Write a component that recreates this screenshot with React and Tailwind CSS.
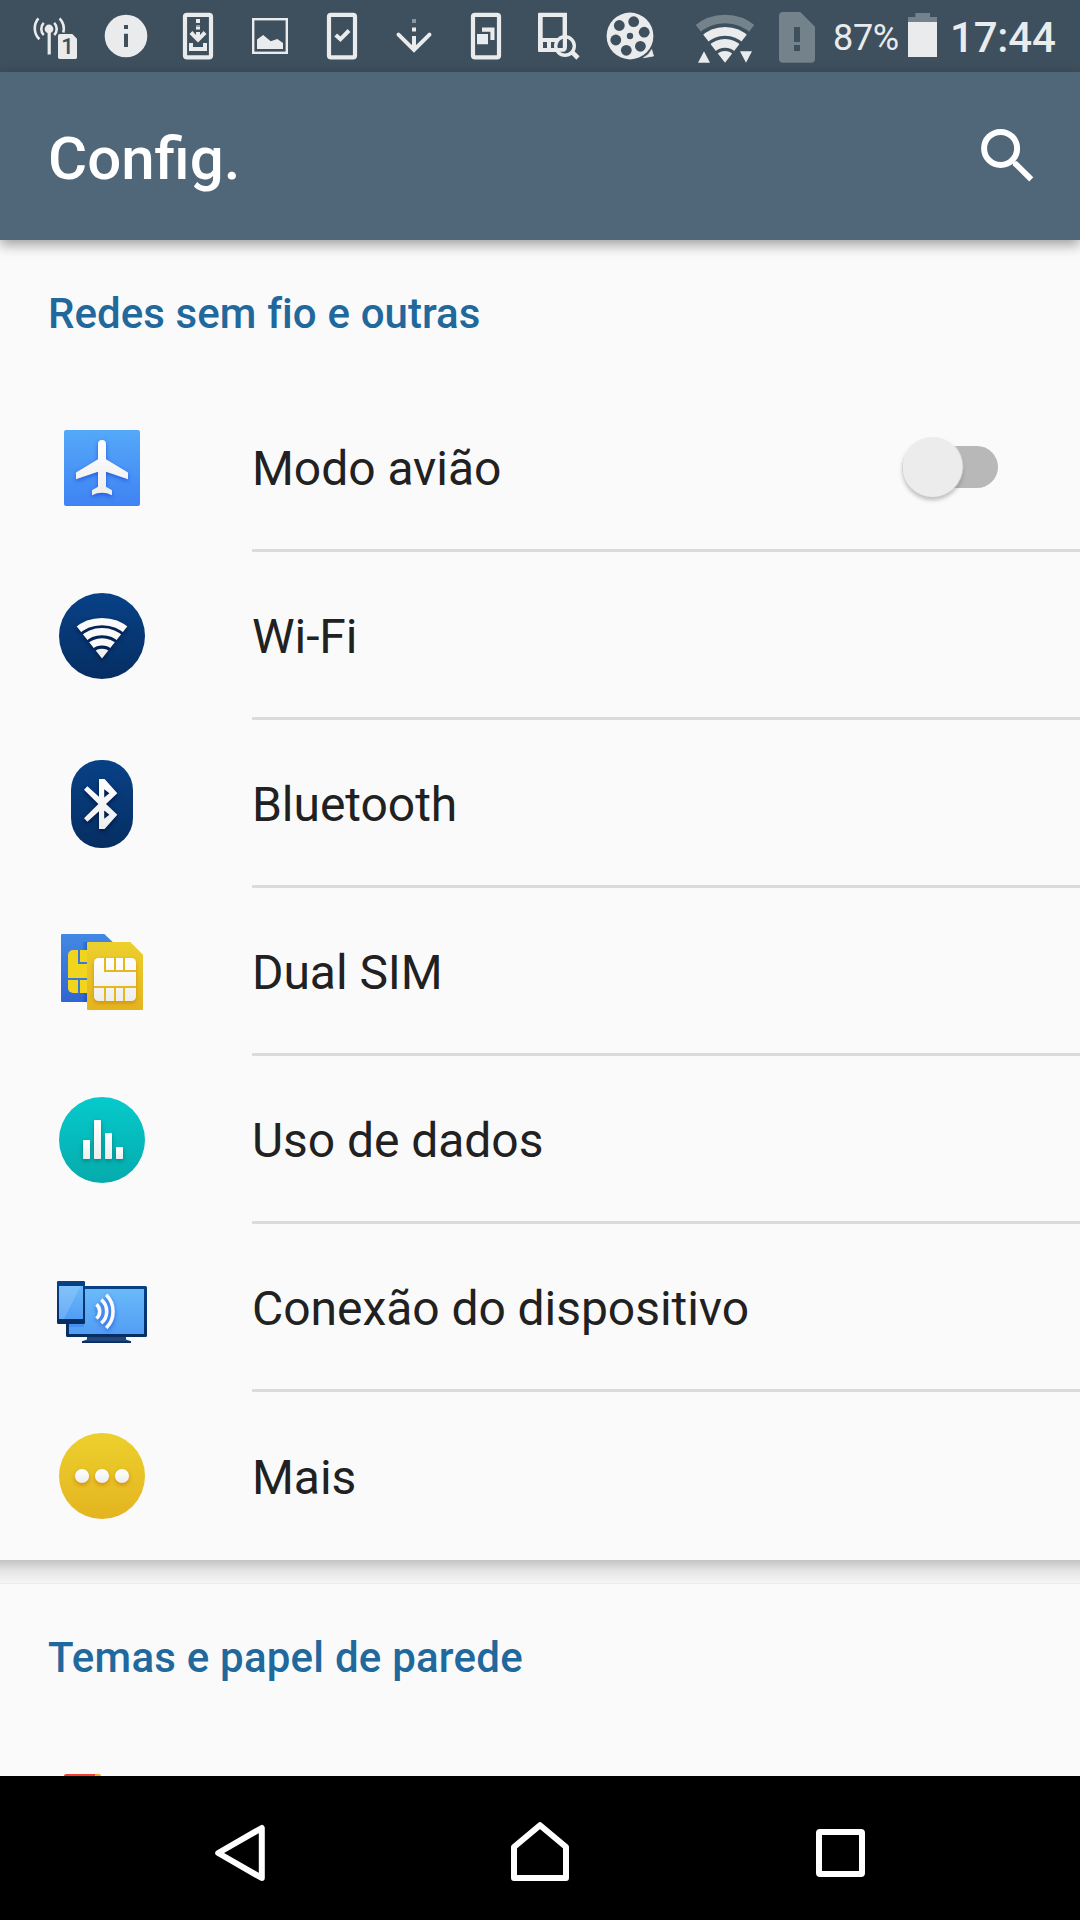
import React from "react";

const LIGHT = "#e9ebed";
const BAR = "#3e4f5d";

function StatusIcon({ children }) {
  return (
    <svg className="h-[72px] w-[72px] shrink-0" viewBox="0 0 72 72" fill={LIGHT}>
      {children}
    </svg>
  );
}

function PhoneFrame() {
  return <rect x="23" y="14.8" width="26" height="42.6" rx="2" fill="none" stroke={LIGHT} strokeWidth="4.2" />;
}

function StatusBar() {
  return (
    <div className="flex h-[72px] items-center bg-[#3e4f5d] pl-[18px] text-[#e9ebed]">
      <StatusIcon>
        <circle cx="31" cy="29" r="4.4" />
        <rect x="29.6" y="29" width="3.2" height="25.5" />
        <g fill="none" stroke={LIGHT} strokeWidth="2.6">
          <path d="M36.2 22.8A8.6 8.6 0 0 1 36.2 35M25.8 22.8A8.6 8.6 0 0 0 25.8 35" />
          <path d="M41.6 18.3A15.5 15.5 0 0 1 45.3 32.5M20.4 18.3A15.5 15.5 0 0 0 21.4 39.3" />
        </g>
        <path d="M42 34H54.3L59 38.7V57.3Q59 59 57.3 59H41.7Q40 59 40 57.3V35.7Q40 34 42 34Z" />
        <text x="43.2" y="54.4" fontSize="22" fontWeight="500" fontFamily="Roboto, sans-serif" fill={BAR}>1</text>
      </StatusIcon>
      <StatusIcon>
        <circle cx="36" cy="36" r="21.3" />
        <path fill={BAR} d="M34 25h4v4h-4zM34 33.7h4V47h-4z" />
      </StatusIcon>
      <StatusIcon>
        <PhoneFrame />
        <path d="M34 19h4v4h-4zM34 27h4v2.5h-4zM34 32h4v3l3.6-3.9 2.9 2.9L36 42.4 27.5 34l2.9-2.9L34 35z" />
        <path opacity=".5" d="M34 25h4v2h-4z" />
        <path d="M27 43H31V47H41V43H45V51H27Z" />
      </StatusIcon>
      <StatusIcon>
        <rect x="19.2" y="19.2" width="33.6" height="33.6" fill="none" stroke={LIGHT} strokeWidth="2.4" />
        <path d="M23 39.5 29.2 35 36.7 41.2 43.3 39 49 43V49H23Z" />
      </StatusIcon>
      <StatusIcon>
        <PhoneFrame />
        <path d="M29.7 35 34.4 39.3 43 30.5" fill="none" stroke={LIGHT} strokeWidth="4" />
      </StatusIcon>
      <StatusIcon>
        <path d="M20.5 34.6 36 50 51.5 34.6" fill="none" stroke={LIGHT} strokeWidth="4" strokeLinecap="round" />
        <path d="M34 36h4v12h-4zM34 27.5h4v4h-4z" />
        <path opacity=".45" d="M34 19h4v4h-4z" />
      </StatusIcon>
      <StatusIcon>
        <PhoneFrame />
        <path d="M27 34H38V44.3H27ZM32 27.6H44.5V40H40.4V31.8H32Z" />
      </StatusIcon>
      <StatusIcon>
        <path fillRule="evenodd" d="M17 12.8H45V52H17Q16 52 16 51V13.8Q16 12.8 17 12.8ZM20.7 17V38H40.6V17ZM21 42V48H25V42ZM29 42V48H33V42Z" />
        <circle cx="43" cy="46" r="9.3" fill={BAR} stroke={LIGHT} strokeWidth="3.4" />
        <path d="M40.8 38H45V46Q45 51.8 41 51.8H35.5V48H40.8Z" />
        <path d="M49.6 51.6 56 58" stroke={LIGHT} strokeWidth="4.6" />
      </StatusIcon>
      <StatusIcon>
        <circle cx="36" cy="36" r="23.4" />
        <g fill={BAR}>
          <circle cx="25.3" cy="25.5" r="5.4" />
          <circle cx="39.7" cy="21.7" r="5.4" />
          <circle cx="50.2" cy="32.2" r="5.4" />
          <circle cx="46.4" cy="46.3" r="5.4" />
          <circle cx="32.3" cy="50.3" r="5.4" />
          <circle cx="21.8" cy="40" r="5.4" />
          <circle cx="36" cy="36" r="3.2" />
        </g>
        <path d="M57.6 49.6 59.5 56 49.5 57.7Q55 55.4 57.6 49.6Z" stroke={LIGHT} strokeWidth=".8" />
      </StatusIcon>
      <svg className="ml-[18px] h-[72px] w-[82px] shrink-0" viewBox="0 0 82 72">
        <clipPath id="signalWedge">
          <path d="M41 62.8 10.6 23.4V0H71.4V23.4Z" />
        </clipPath>
        <g clipPath="url(#signalWedge)" fill="none" stroke={LIGHT} strokeWidth="8.7">
          <circle cx="41" cy="62" r="43" stroke="#74828c" />
          <circle cx="41" cy="62" r="30.7" />
          <circle cx="41" cy="62" r="18.7" />
          <circle cx="41" cy="62" r="11" fill={LIGHT} stroke="none" />
        </g>
        <path fill={LIGHT} d="M20 51.3 26 62.8H14ZM56 51.2H68L62 62.8Z" />
      </svg>
      <svg className="h-[72px] w-[60px] shrink-0" viewBox="0 0 60 72">
        <path fill="#74828c" d="M17 12H34.3L49 26.7V58.7Q49 62.8 45 62.8H17Q13 62.8 13 58.7V16Q13 12 17 12Z" />
        <path fill={BAR} d="M28 27h6v15h-6zM28 45h6v6h-6z" />
      </svg>
      <span className="ml-[7px] mt-[4px] w-[67px] text-[36px] leading-[42px] tracking-[-0.3px]">87%</span>
      <svg className="ml-[8px] h-[72px] w-[29px] shrink-0" viewBox="0 0 29 72">
        <path fill="#74828c" d="M7.3 13H22V17H29V22H0V17H7.3Z" />
        <path fill={LIGHT} d="M0 22H29V57H0Z" />
      </svg>
      <span className="ml-[13px] mt-[3px] text-[42px] font-medium leading-[50px] tracking-[-0.2px]">17:44</span>
    </div>
  );
}

function AppBar() {
  return (
    <header className="relative z-10 flex h-[168px] items-center justify-between bg-[#50677a] pl-[48px] pr-[44px] shadow-[0_5px_12px_rgba(0,0,0,0.36)]">
      <h1 className="mt-[5px] text-[60px] font-medium leading-[72px] text-white">Config.</h1>
      <svg className="h-[64px] w-[64px]" viewBox="0 0 64 64" fill="none" stroke="#fff" strokeWidth="6">
        <circle cx="28.6" cy="24.4" r="16.5" />
        <path d="M40.8 37.2V41.2L57.2 57.4 61.3 53.3 45 37.2Z" fill="#fff" stroke="none" />
      </svg>
    </header>
  );
}

function Grad({ id, from, to }) {
  return (
    <linearGradient id={id} x1="0" y1="0" x2="0" y2="1">
      <stop offset="0" stopColor={from} />
      <stop offset="1" stopColor={to} />
    </linearGradient>
  );
}

function RowIcon({ children }) {
  return (
    <svg className="h-[120px] w-[120px] shrink-0" viewBox="0 0 120 120">
      {children}
    </svg>
  );
}

function AirplaneIcon() {
  return (
    <RowIcon>
      <rect x="22" y="22" width="76" height="76" rx="2" fill="url(#skyBlue)" />
      <path
        className="drop-shadow-[0_2px_2px_rgba(20,70,220,0.7)]"
        fill="url(#white)"
        d="M56 36Q56 32 60 32Q64 32 64 36V51.3L86 64.4V71.2L64 63.8V78.8L70 82.3V87.2Q60 82.4 50 87.2V82.3L56 78.8V63.8L34 71.2V64.4L56 51.3Z"
      />
    </RowIcon>
  );
}

function WifiIcon() {
  return (
    <RowIcon>
      <clipPath id="wifiWedge">
        <path d="M60 82.6 32.2 47.3V30H87.8V47.3Z" />
      </clipPath>
      <circle cx="60" cy="60" r="43" fill="url(#navy)" />
      <g className="drop-shadow-[0_2px_2px_rgba(0,10,50,0.7)]">
        <g clipPath="url(#wifiWedge)" fill="none" stroke="#fafafa" strokeWidth="7.3">
          <circle cx="60" cy="84.5" r="38.9" />
          <circle cx="60" cy="84.5" r="28.8" />
          <circle cx="60" cy="84.5" r="18.6" />
          <circle cx="60" cy="84.5" r="11.8" fill="#f0f0f0" stroke="none" />
        </g>
      </g>
    </RowIcon>
  );
}

function BluetoothIcon() {
  return (
    <RowIcon>
      <rect x="29" y="16" width="62" height="88" rx="30" fill="url(#navy)" />
      <path
        className="drop-shadow-[0_2px_2px_rgba(0,10,50,0.7)]"
        fill="url(#white)"
        fillRule="evenodd"
        d="M57 35H62.6L75.3 49.3 64 60 75.3 70.7 62.6 85H57V67.3L45.4 77.8 42 74.2 56.4 60 42 45.8 45.4 42.2 57 52.7ZM62.2 45.2V53.6L67.4 49.3ZM62.2 66.4V74.8L67.4 70.7Z"
      />
    </RowIcon>
  );
}

function SimIcon() {
  return (
    <RowIcon>
      <clipPath id="backCard">
        <path d="M20 22H62.3L72 31.3V90H20Q19 90 19 89V23Q19 22 20 22Z" />
      </clipPath>
      <g clipPath="url(#backCard)">
        <rect x="19" y="22" width="56" height="68" fill="url(#simBlue)" />
        <rect x="26" y="38" width="42" height="43" rx="5" fill="#f0d51c" />
        <path fill="#3c78da" d="M36 38h2v12h9v2H36zM26 66h20v2H26zM36 68h2v13h-2z" />
        <path fill="url(#edgeShade)" d="M40 30H46V38H40ZM40 81H46V90H40Z" />
      </g>
      <path d="M46 30H88.3L101 42.7V97Q101 98 100 98H46Q45 98 45 97V31Q45 30 46 30Z" fill="url(#gold)" />
      <rect x="52" y="46" width="42" height="43" rx="4.5" fill="url(#white)" className="drop-shadow-[0_2px_2px_rgba(200,130,0,0.7)]" />
      <path fill="#e5b820" d="M62 46h2v12h8V46h2v12h7V46h2v12h11v2H62zM52 74h42v2H83v13h-2V76h-7v13h-2V76h-8v13h-2V76H52z" />
    </RowIcon>
  );
}

function DataIcon() {
  return (
    <RowIcon>
      <circle cx="60" cy="60" r="43" fill="url(#teal)" />
      <g fill="url(#white)" className="drop-shadow-[0_2px_2px_rgba(0,80,80,0.5)]">
        <rect x="41" y="60" width="7" height="19" rx=".7" />
        <rect x="52" y="40" width="7" height="39" rx=".7" />
        <rect x="63" y="53" width="7" height="26" rx=".7" />
        <rect x="74" y="67" width="7" height="12" rx=".7" />
      </g>
    </RowIcon>
  );
}

function DeviceIcon() {
  return (
    <RowIcon>
      <path d="M45 88H84V91.5L89 93.3V95H40V93.3L45 91.5Z" fill="#21477a" />
      <path d="M40 93.3H89V95H40Z" fill="#082d63" />
      <rect x="24" y="38" width="81" height="51" rx="1.5" fill="url(#navy)" />
      <rect x="27" y="41" width="75" height="45" fill="url(#screen)" />
      <rect x="27" y="76" width="15" height="3" fill="#2f6fe0" opacity=".35" />
      <rect x="15" y="33" width="28" height="43" rx="1.2" fill="url(#navy)" />
      <rect x="17" y="38" width="24" height="33" fill="url(#screen)" />
      <path d="M17 38H38.7L22 71H17Z" fill="#fff" opacity=".15" />
      <g fill="none" stroke="#fafafa" strokeWidth="3.6" className="drop-shadow-[0_2px_2px_rgba(20,70,220,0.7)]">
        <path d="M54.4 56.3A9.3 9.3 0 0 1 54.4 70.5" />
        <path d="M59.2 51.6A15.4 15.4 0 0 1 59.2 75.2" />
        <path d="M64.2 46.8A23.5 23.5 0 0 1 64.2 80" />
      </g>
    </RowIcon>
  );
}

function MoreIcon() {
  return (
    <RowIcon>
      <circle cx="60" cy="60" r="43" fill="url(#gold)" />
      <g fill="url(#white)" className="drop-shadow-[0_2px_2px_rgba(200,120,0,0.7)]">
        <circle cx="40" cy="60" r="7.1" />
        <circle cx="60" cy="60" r="7.1" />
        <circle cx="80" cy="60" r="7.1" />
      </g>
    </RowIcon>
  );
}

function Toggle() {
  return (
    <button role="switch" aria-checked="false" aria-label="Modo avião" className="mr-[82px] flex h-[60px] w-[96px] items-center">
      <span className="flex h-[42px] w-full items-center rounded-full bg-[#b8b8b8]">
        <span className="mt-[1px] h-[60px] w-[60px] shrink-0 translate-x-[0.5px] rounded-full bg-[#ececec] shadow-[0_3px_4px_rgba(0,0,0,0.25),0_0_1px_1px_rgba(255,255,255,0.6)]" />
      </span>
    </button>
  );
}

const ROWS = [
  { label: "Modo avião", Icon: AirplaneIcon, toggle: true },
  { label: "Wi-Fi", Icon: WifiIcon },
  { label: "Bluetooth", Icon: BluetoothIcon },
  { label: "Dual SIM", Icon: SimIcon },
  { label: "Uso de dados", Icon: DataIcon },
  { label: "Conexão do dispositivo", Icon: DeviceIcon },
  { label: "Mais", Icon: MoreIcon },
];

function SettingRow({ label, Icon, toggle, last }) {
  return (
    <li className="flex h-[168px] items-center pl-[42px]">
      <Icon />
      <div className={`ml-[90px] flex h-full flex-1 items-center justify-between ${last ? "" : "border-b-[3px] border-[#dbdbdb]"}`}>
        <span className={`text-[48px] leading-[56px] text-[#212121] tracking-[-0.05px] ${last ? "mt-[4px]" : "mt-[5px]"}`}>{label}</span>
        {toggle && <Toggle />}
      </div>
    </li>
  );
}

function SectionTitle({ children }) {
  return <h2 className="flex h-[144px] items-center pl-[48px] pt-[4px] text-[42px] font-medium leading-[50px] text-[#21689d]">{children}</h2>;
}

function NavBar() {
  return (
    <nav className="flex h-[144px] items-center justify-center gap-[200px] bg-black">
      <svg className="h-[100px] w-[100px]" viewBox="0 0 100 100" fill="none" stroke="#fff" strokeWidth="6" strokeLinejoin="round">
        <path d="M28.2 55 71.8 30V80Z" />
      </svg>
      <svg className="h-[100px] w-[100px]" viewBox="0 0 100 100" fill="none" stroke="#fff" strokeWidth="6" strokeLinejoin="round">
        <path d="M24 80V49L50 27.2 76 49V80Z" />
      </svg>
      <svg className="h-[100px] w-[100px]" viewBox="0 0 100 100" fill="none" stroke="#fff" strokeWidth="6">
        <rect x="29" y="34" width="43" height="42" rx="1" />
      </svg>
    </nav>
  );
}

export default function App() {
  return (
    <div className="flex h-[1920px] w-[1080px] flex-col overflow-hidden bg-[#fafafa] font-['Roboto',sans-serif]">
      <svg className="absolute h-0 w-0" aria-hidden="true">
        <defs>
          <Grad id="skyBlue" from="#54a9f8" to="#3f83f3" />
          <Grad id="navy" from="#084187" to="#062e62" />
          <Grad id="simBlue" from="#4388e4" to="#3065d2" />
          <Grad id="gold" from="#ecd02d" to="#e4b420" />
          <Grad id="teal" from="#06cacc" to="#05abac" />
          <Grad id="screen" from="#6abaf9" to="#529df5" />
          <Grad id="white" from="#ffffff" to="#ededed" />
          <linearGradient id="edgeShade">
            <stop offset="0" stopColor="#1240b0" stopOpacity="0" />
            <stop offset="1" stopColor="#1240b0" stopOpacity=".6" />
          </linearGradient>
        </defs>
      </svg>
      <StatusBar />
      <AppBar />
      <main className="flex-1 overflow-hidden">
        <section className="h-[1320px]">
          <SectionTitle><span className="tracking-[0.01px] [font-variant-ligatures:common-ligatures] [word-spacing:0.4px]">Redes sem fio e outras</span></SectionTitle>
          <ul>
            {ROWS.map((row, i) => (
              <SettingRow key={row.label} {...row} last={i === ROWS.length - 1} />
            ))}
          </ul>
        </section>
        <div className="h-[24px] border-b border-[#ebebeb] bg-linear-to-b from-[#c4c4c4] via-[#e6e6e6] via-50% to-[#f5f5f5]" />
        <section className="flex h-[192px] flex-col justify-between">
          <SectionTitle><span className="tracking-[0.22px]">Temas e papel de parede</span></SectionTitle>
          <div className="ml-[64px] flex h-[2px] w-[37px]">
            <span className="w-[31px] rounded-tl-[2px] bg-[#ee4035]" />
            <span className="w-[6px] rounded-tr-[2px] bg-[#f5a623]" />
          </div>
        </section>
      </main>
      <NavBar />
    </div>
  );
}
